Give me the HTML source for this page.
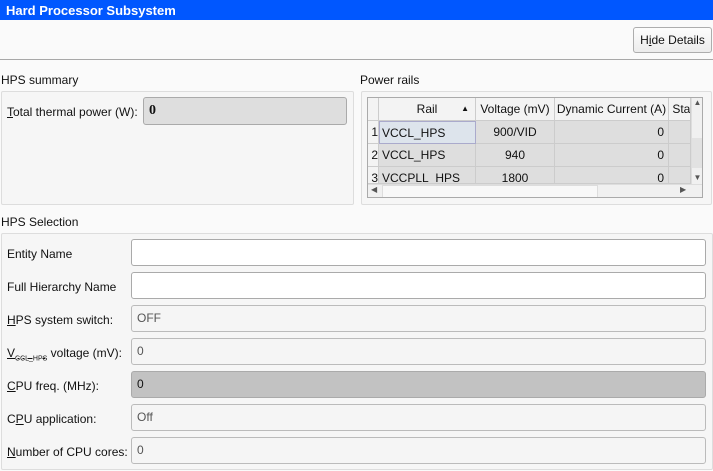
<!DOCTYPE html><html><head><style>
*{box-sizing:border-box;margin:0;padding:0}
body{width:713px;height:471px;background:#fafafa;font-family:"Liberation Sans",sans-serif;font-size:12px;color:#111;position:relative;overflow:hidden}
.a{position:absolute}
.t{left:0;top:0;width:713px;height:20px;background:#0057ff;color:#fff;font-weight:bold;font-size:13px;padding:3px 6px}
.hr{left:0;top:59px;width:713px;height:1px;background:#a8a8a8}
.btn{left:633px;top:27px;width:79px;height:26px;border:1px solid #adadad;border-radius:3px;background:linear-gradient(#fdfdfd,#ececec);text-align:center;line-height:24px}
.gb{border:1px solid #ddd;border-radius:2px;background:#f6f6f6}
.in{border:1px solid #bbb;border-radius:3px;background:#f5f5f5;padding-left:5px;line-height:25px;color:#555}
.lb{left:7px}
u{text-decoration:underline}
.tb{left:367px;top:97px;width:336px;height:101px;border:1px solid #aaa;background:#f0f0f0;overflow:hidden}
.c{position:absolute;border-right:1px solid #ccc;border-bottom:1px solid #ccc;line-height:22px;white-space:nowrap;overflow:hidden}
</style></head><body>
<div class="a t">Hard Processor Subsystem</div>
<div class="a btn">H<u>i</u>de Details</div>
<div class="a hr"></div>
<div class="a" style="left:1px;top:73px">HPS summary</div>
<div class="a gb" style="left:1px;top:91px;width:353px;height:114px"></div>
<div class="a" style="left:7px;top:105px"><u>T</u>otal thermal power (W):</div>
<div class="a in" style="left:143px;top:97px;width:204px;height:28px;background:#dedede;border-color:#aaa;color:#111;font-weight:bold;font-family:'Liberation Serif',serif;font-size:14px">0</div>
<div class="a" style="left:360px;top:73px">Power rails</div>
<div class="a gb" style="left:361px;top:91px;width:351px;height:114px"></div>
<div class="a tb">
<div class="c" style="left:0;top:0;width:11px;height:23px;background:#f3f3f3"></div>
<div class="c" style="left:11px;top:0;width:97px;height:23px;background:#f3f3f3;text-align:center">Rail<span style="position:absolute;right:6px;font-size:8px">▲</span></div>
<div class="c" style="left:108px;top:0;width:79px;height:23px;background:#f3f3f3;text-align:center">Voltage (mV)</div>
<div class="c" style="left:187px;top:0;width:114px;height:23px;background:#f3f3f3;text-align:center">Dynamic Current (A)</div>
<div class="c" style="left:301px;top:0;width:22px;height:23px;background:#f3f3f3">&nbsp;Star</div>
<div class="c" style="left:0;top:23px;width:11px;height:23px;background:#f3f3f3">&nbsp;1</div>
<div class="c" style="left:11px;top:23px;width:97px;height:23px;background:#dde4ec;border:1px solid #aac;padding-left:2px">VCCL_HPS</div>
<div class="c" style="left:108px;top:23px;width:79px;height:23px;background:#dedede;text-align:center">900/VID</div>
<div class="c" style="left:187px;top:23px;width:114px;height:23px;background:#dedede;text-align:right;padding-right:4px">0</div>
<div class="c" style="left:301px;top:23px;width:22px;height:23px;background:#dedede"></div>
<div class="c" style="left:0;top:46px;width:11px;height:23px;background:#f3f3f3">&nbsp;2</div>
<div class="c" style="left:11px;top:46px;width:97px;height:23px;background:#dedede;padding-left:3px">VCCL_HPS</div>
<div class="c" style="left:108px;top:46px;width:79px;height:23px;background:#dedede;text-align:center">940</div>
<div class="c" style="left:187px;top:46px;width:114px;height:23px;background:#dedede;text-align:right;padding-right:4px">0</div>
<div class="c" style="left:301px;top:46px;width:22px;height:23px;background:#dedede"></div>
<div class="c" style="left:0;top:69px;width:11px;height:17px;background:#f3f3f3">&nbsp;3</div>
<div class="c" style="left:11px;top:69px;width:97px;height:17px;background:#dedede;padding-left:3px">VCCPLL_HPS</div>
<div class="c" style="left:108px;top:69px;width:79px;height:17px;background:#dedede;text-align:center">1800</div>
<div class="c" style="left:187px;top:69px;width:114px;height:17px;background:#dedede;text-align:right;padding-right:4px">0</div>
<div class="c" style="left:301px;top:69px;width:22px;height:17px;background:#dedede"></div>
<div class="a" style="left:323px;top:0;width:12px;height:86px;background:#f0f0f0;border-left:1px solid #ddd"><div style="position:absolute;left:0;top:40px;width:11px;height:30px;background:#e2e2e2"></div><div style="font-size:8px;text-align:center;color:#555">▲</div><div style="position:absolute;bottom:2px;width:11px;font-size:8px;text-align:center;color:#555">▼</div></div>
<div class="a" style="left:0;top:86px;width:335px;height:14px;background:#f0f0f0;border-top:1px solid #ddd"><div style="position:absolute;left:14px;top:0;width:216px;height:13px;background:#f8f8f8;border:1px solid #ddd"></div><span style="position:absolute;left:3px;font-size:8px;color:#555">◀</span><span style="position:absolute;left:312px;font-size:8px;color:#555">▶</span></div>
</div>
<div class="a" style="left:1px;top:215px">HPS Selection</div>
<div class="a gb" style="left:1px;top:233px;width:712px;height:237px"></div>
<div class="a lb" style="top:247px">Entity Name</div>
<div class="a in" style="left:131px;top:239px;width:575px;height:27px;background:#fff;border-color:#aaa"></div>
<div class="a lb" style="top:280px">Full Hierarchy Name</div>
<div class="a in" style="left:131px;top:272px;width:575px;height:27px;background:#fff;border-color:#aaa"></div>
<div class="a lb" style="top:313px"><u>H</u>PS system switch:</div>
<div class="a in" style="left:131px;top:305px;width:575px;height:27px">OFF</div>
<div class="a lb" style="top:346px"><u>V<sub style="font-size:7px">CCL_HPS</sub></u> voltage (mV):</div>
<div class="a in" style="left:131px;top:338px;width:575px;height:27px">0</div>
<div class="a lb" style="top:379px"><u>C</u>PU freq. (MHz):</div>
<div class="a in" style="left:131px;top:371px;width:575px;height:27px;background:#c2c2c2;border-color:#aaa;color:#111">0</div>
<div class="a lb" style="top:412px">C<u>P</u>U application:</div>
<div class="a in" style="left:131px;top:404px;width:575px;height:27px">Off</div>
<div class="a lb" style="top:445px"><u>N</u>umber of CPU cores:</div>
<div class="a in" style="left:131px;top:437px;width:575px;height:27px">0</div>
</body></html>
